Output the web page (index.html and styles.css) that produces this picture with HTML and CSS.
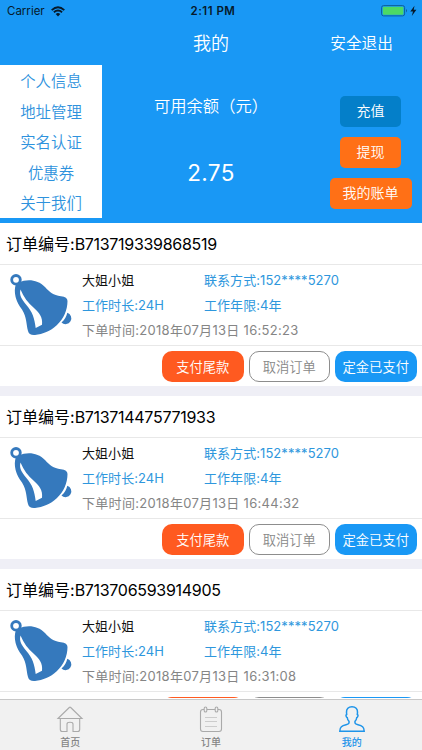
FILE: index.html
```html
<!DOCTYPE html>
<html lang="zh-CN">
<head>
    <meta charset="UTF-8">
    <meta name="viewport" content="width=device-width, initial-scale=1.0">
    <title>我的</title>
    <link rel="stylesheet" href="styles.css">
</head>
<body>

<!-- 铃铛图标 -->
<svg class="sprite" width="0" height="0">
    <symbol id="bell" viewBox="0 0 80 75">
        <circle cx="16" cy="14.8" r="4.300" fill="none" stroke="#3579bd" stroke-width="2.800"/>
        <path fill="#3579bd" d="M19 17.500C27 13.500 38 14.500 45 22C50 27.500 53 30 61 31.300Q67.500 32 67.500 36C67.500 45 63.500 54 57 60C50 66.500 43 69 35 70Q29 70.500 28 66C26 58 27 53 22 44.500C16 37 13 27 16 19Z"/>
        <path fill="#3579bd" d="M61.500 57.500C65 55 66.500 51 67.300 47.800A5.800 5.800 0 1 1 61.500 57.500Z"/>
        <path fill="#fff" d="M20.500 24.500C19 30 21.500 34 26 39.500C32.500 47 34.500 53 35.700 63L42 59.800C43 52 39 47.500 34 43C28 38 23.500 32 20.500 24.500Z"/>
    </symbol>
</svg>

<div class="screen">
    <header class="header">
        <div class="status">
            <div class="carrier">Carrier
                <svg width="14" height="11" viewBox="0 0 14 11">
                    <path d="M.7 4.100Q7-1.500 13.300 4.100M2.900 6.300Q7 2.800 11.100 6.300" fill="none" stroke="#061a2b" stroke-width="1.900"/>
                    <path d="M4.700 8Q7 6 9.300 8L7 10.400Z" fill="#061a2b"/>
                </svg>
            </div>
            <div class="time">2:11 PM</div>
            <div class="power">
                <svg width="36" height="12" viewBox="0 0 36 12">
                    <rect x=".6" y=".6" width="23" height="10.300" rx="2" fill="none" stroke="#0d5f9c" stroke-width="1"/>
                    <rect x="1.800" y="1.700" width="20.600" height="8.100" rx="1" fill="#4cd964"/>
                    <path d="M25 4Q27 5.700 25 7.500Z" fill="#0d5f9c"/>
                    <path d="M33.500.7L29.300 6.400H32L30.800 11L35.400 4.800H32.700Z" fill="#061a2b"/>
                </svg>
            </div>
        </div>
        <div class="navbar">
            <div class="nav-title">我的</div>
            <a class="logout">安全退出</a>
        </div>
        <div class="account">
            <nav class="menu">
                <a>个人信息</a>
                <a>地址管理</a>
                <a>实名认证</a>
                <a>优惠券</a>
                <a>关于我们</a>
            </nav>
            <div class="balance">
                <div class="balance-label">可用余额（元）</div>
                <div class="balance-num">2.75</div>
            </div>
            <div class="wallet">
                <button class="recharge">充值</button>
                <button>提现</button>
                <button class="bill">我的账单</button>
            </div>
        </div>
    </header>

    <!-- 订单列表 -->
    <main class="orders">
        <section class="order">
            <h2>订单编号:<span class="order-no">B713719339868519</span></h2>
            <div class="info">
                <svg class="bell"><use href="#bell"/></svg>
                <div class="detail">
                    <span class="name">大姐小姐</span><span>联系方式:152****5270</span>
                    <span>工作时长:24H</span><span>工作年限:4年</span>
                    <span class="date">下单时间:2018年07月13日 16:52:23</span>
                </div>
            </div>
            <div class="actions">
                <button class="pay">支付尾款</button>
                <button class="cancel">取消订单</button>
                <button class="paid">定金已支付</button>
            </div>
        </section>
        <section class="order">
            <h2>订单编号:<span class="order-no">B713714475771933</span></h2>
            <div class="info">
                <svg class="bell"><use href="#bell"/></svg>
                <div class="detail">
                    <span class="name">大姐小姐</span><span>联系方式:152****5270</span>
                    <span>工作时长:24H</span><span>工作年限:4年</span>
                    <span class="date">下单时间:2018年07月13日 16:44:32</span>
                </div>
            </div>
            <div class="actions">
                <button class="pay">支付尾款</button>
                <button class="cancel">取消订单</button>
                <button class="paid">定金已支付</button>
            </div>
        </section>
        <section class="order">
            <h2>订单编号:<span class="order-no">B713706593914905</span></h2>
            <div class="info">
                <svg class="bell"><use href="#bell"/></svg>
                <div class="detail">
                    <span class="name">大姐小姐</span><span>联系方式:152****5270</span>
                    <span>工作时长:24H</span><span>工作年限:4年</span>
                    <span class="date">下单时间:2018年07月13日 16:31:08</span>
                </div>
            </div>
            <div class="actions">
                <button class="pay">支付尾款</button>
                <button class="cancel">取消订单</button>
                <button class="paid">定金已支付</button>
            </div>
        </section>
    </main>

    <!-- 底部导航 -->
    <footer class="tabbar">
        <a class="tab">
            <svg width="28" height="28" viewBox="0 0 28 28">
                <path d="M2 13.500L13.300 2.500Q14 1.800 14.700 2.500L26 13.500ZM4.300 13.500V24.500Q4.300 26.500 6.300 26.500H11V19Q11 17.300 14 17.300T17 19V26.500H21.700Q23.700 26.500 23.700 24.500V13.500"/>
            </svg>
            首页
        </a>
        <a class="tab">
            <svg width="28" height="28" viewBox="0 0 28 28">
                <path d="M7 4.500H6Q3.500 4.500 3.500 7V24Q3.500 26.500 6 26.500H22Q24.500 26.500 24.500 24V7Q24.500 4.500 22 4.500H21M10 4.500H18"/>
                <rect x="7.200" y="2" width="2.600" height="5" rx="1.300"/>
                <rect x="18.200" y="2" width="2.600" height="5" rx="1.300"/>
                <path class="thin" d="M8 12.500H20M8 16.500H20M8 21.500H20"/>
            </svg>
            订单
        </a>
        <a class="tab active">
            <svg width="28" height="28" viewBox="0 0 28 28">
                <path d="M14 1.800C17.600 1.800 19.700 4 19.500 7.200L19.300 9.500Q20.600 10 19.500 12L18.700 12.700Q18.500 15 17 16.300V18Q17.400 19.200 20 19.800C24 20.800 26.200 21.800 26.200 26.200H1.800C1.800 21.800 4 20.800 8 19.800Q10.600 19.200 11 18V16.300Q9.500 15 9.300 12.700L8.500 12Q7.400 10 8.700 9.500L8.500 7.200C8.300 4 10.400 1.800 14 1.800Z"/>
            </svg>
            我的
        </a>
    </footer>
</div>

</body>
</html>
```
FILE: styles.css
```css
* {
    box-sizing: border-box;
}
body {
    margin: 0;
    font-family: Inter, "Noto Sans CJK SC", sans-serif;
}
button {
    padding: 0;
    border: none;
    font-family: inherit;
    font-size: 14px;
    font-weight: 350;
    color: #fff;
}
.sprite {
    display: block;
}
.screen {
    display: flex;
    flex-direction: column;
    width: 422px;
    height: 750px;
    overflow: hidden;
    background-color: #fff;
}
.header {
    flex: none;
    height: 223px;
    background-color: #1998f5;
    color: #fff;
}
.status {
    display: grid;
    grid-template-columns: 1fr 1fr 1fr;
    align-items: center;
    height: 22px;
    padding: 0 5px 0 7px;
    font-size: 11.500px;
    color: #061a2b;
}
.carrier {
    display: flex;
    align-items: center;
    gap: 6px;
}
.time {
    padding-left: 2px;
    text-align: center;
    font-weight: 600;
    letter-spacing: 0.5px;
}
.power {
    display: flex;
    justify-content: flex-end;
}
.navbar {
    display: grid;
    grid-template-columns: 1fr auto 1fr;
    align-items: center;
    height: 43px;
    padding: 0 29px 3px 29px;
    font-weight: 350;
}
.nav-title {
    grid-column: 2;
    font-size: 18px;
}
.logout {
    text-align: right;
    font-size: 15.700px;
}
.account {
    display: grid;
    grid-template-columns: 102px 1fr 102px;
    height: 158px;
    font-weight: 350;
}
.menu {
    display: grid;
    grid-template-rows: repeat(5, 30.500px);
    height: 153px;
    padding-top: 1px;
    background-color: #fff;
    color: #2e92dd;
    font-size: 15.400px;
    text-align: center;
}
.menu a {
    line-height: 31px;
}
.balance {
    text-align: center;
}
.balance-label {
    padding-top: 29px;
    font-size: 16.300px;
    line-height: 24px;
}
.balance-num {
    margin-top: 39px;
    font-size: 22.500px;
    font-weight: 400;
    line-height: 32px;
    letter-spacing: 0.4px;
}
.wallet {
    display: flex;
    flex-direction: column;
    align-items: center;
    gap: 10px;
    padding: 31px 1px 0 0;
}
.wallet button {
    width: 61px;
    height: 31px;
    padding-bottom: 3px;
    border-radius: 5px;
    background-color: #ff7016;
}
.wallet .recharge {
    background-color: #047fc9;
}
.wallet .bill {
    width: 82px;
}
.orders {
    flex: 1;
    min-height: 0;
    overflow: hidden;
    border-bottom: 1px solid #fff;
}
.order {
    height: 173px;
    border-bottom: 10px solid #efeff6;
}
.order h2 {
    height: 42px;
    margin: 0;
    padding-left: 6px;
    border-bottom: 1px solid #e8e8e8;
    font-size: 16px;
    font-weight: 400;
    line-height: 42px;
}
.order-no {
    letter-spacing: -0.3px;
}
.info {
    display: flex;
    height: 81px;
    border-bottom: 1px solid #e8e8e8;
}
.bell {
    flex: none;
    width: 80px;
    height: 75px;
}
.detail {
    display: grid;
    grid-template-columns: 122px 1fr;
    grid-template-rows: repeat(3, 25px);
    flex: 1;
    padding: 3px 0 0 2px;
    color: #2e97dd;
    font-size: 13px;
    line-height: 25px;
    letter-spacing: 0.06px;
    white-space: nowrap;
}
.detail .name {
    color: #111;
}
.detail .date {
    grid-column: 1 / 3;
    letter-spacing: 0.3px;
    color: #858585;
}
.actions {
    display: flex;
    justify-content: flex-end;
    gap: 5px;
    padding: 5px 5.500px 0 0;
}
.actions button {
    width: 81.500px;
    height: 31px;
    padding-bottom: 1px;
    border-radius: 10px;
    font-size: 13.300px;
}
.actions .pay {
    background-color: #ff5a20;
}
.actions .cancel {
    border: 1px solid #8d8d8d;
    background-color: #fff;
    color: #888;
}
.actions .paid {
    background-color: #1998f5;
}
.tabbar {
    display: grid;
    grid-template-columns: repeat(3, 1fr);
    flex: none;
    height: 51px;
    border-top: 1px solid #c8c8c8;
    background-color: #f1f1f1;
}
.tab {
    display: flex;
    flex-direction: column;
    align-items: center;
    padding-top: 5px;
    color: #858585;
    font-size: 10px;
    font-weight: 500;
    line-height: 19px;
}
.tab svg {
    fill: none;
    stroke: #aaa;
    stroke-width: 1.1;
}
.tab .thin {
    stroke: #ccc;
}
.tab.active {
    color: #1e94e9;
}
.tab.active svg {
    stroke: #1e94e9;
    stroke-width: 1.5;
}
```
